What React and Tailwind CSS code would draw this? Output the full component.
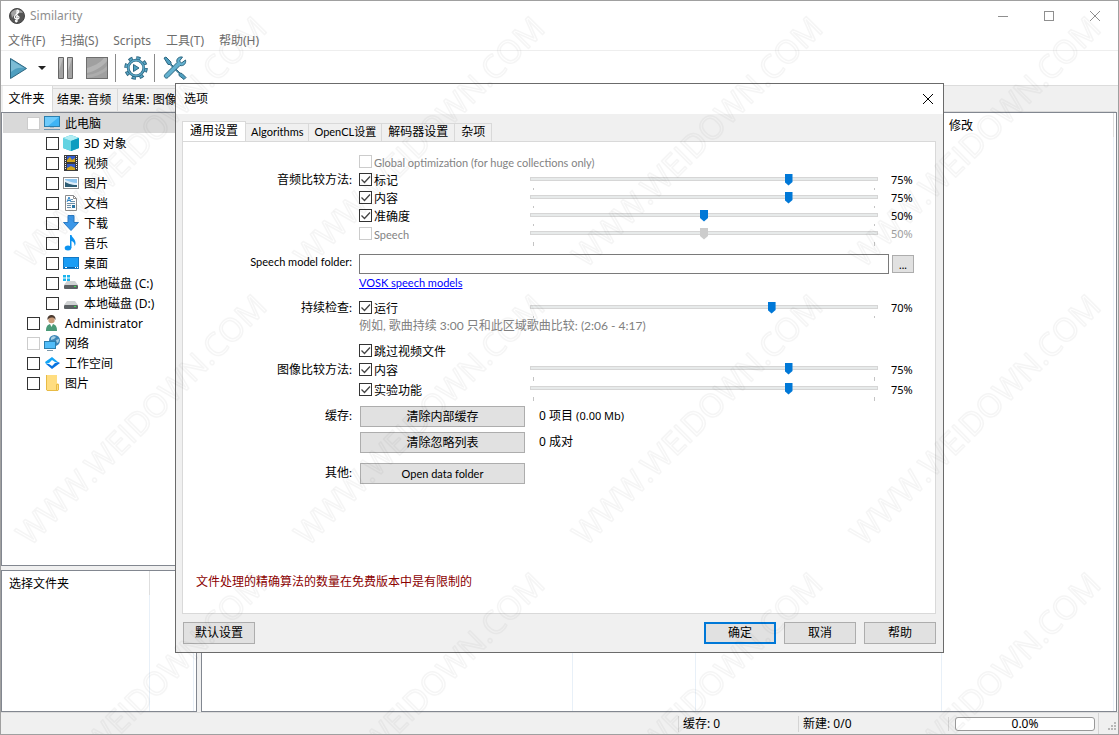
import { useState } from 'react'
import clsx from 'clsx'

const uiFont = 'font-["Noto_Sans","Noto_Sans_CJK_SC",sans-serif]'
const dialogFont = 'font-["Lato","Noto_Sans_CJK_SC",sans-serif]'

const menus = ['文件(F)', '扫描(S)', 'Scripts', '工具(T)', '帮助(H)']

const treeItems = [
  { label: '此电脑', icon: 'computer', selected: true, dim: true },
  { label: '3D 对象', icon: 'cube', child: true },
  { label: '视频', icon: 'film', child: true },
  { label: '图片', icon: 'picture', child: true },
  { label: '文档', icon: 'document', child: true },
  { label: '下载', icon: 'download', child: true },
  { label: '音乐', icon: 'music', child: true },
  { label: '桌面', icon: 'desktop', child: true },
  { label: '本地磁盘 (C:)', icon: 'systemDrive', child: true },
  { label: '本地磁盘 (D:)', icon: 'drive', child: true },
  { label: 'Administrator', icon: 'user' },
  { label: '网络', icon: 'network', dim: true },
  { label: '工作空间', icon: 'workspace' },
  { label: '图片', icon: 'folder' },
]

const dialogTabs = ['通用设置', 'Algorithms', 'OpenCL设置', '解码器设置', '杂项']

const icons = {
  computer: (
    <>
      <rect x="0.5" y="1.5" width="15" height="10" fill="#3fb4f5" stroke="#2b7fae" />
      <path d="M1 2h14L4 11H1z" fill="#6fcbfb" />
      <path d="M6 12h4v1H6z" fill="#a9bccb" />
      <path d="M0 14.5h16" stroke="#6f93ad" />
    </>
  ),
  cube: (
    <>
      <path d="M8 0l8 3v10l-8 3-8-3V3z" fill="#18b1cf" />
      <path d="M0 3l8 3v10l-8-3z" fill="#63d3e2" />
      <path d="M8 0l8 3-8 3-8-3z" fill="#b0edf3" />
      <path d="M8 6l8-3v10l-8 3z" fill="#0f9dc0" />
    </>
  ),
  film: (
    <>
      <rect x="1" y="0" width="14" height="16" fill="#3c3c3c" />
      <rect x="4" y="1" width="8" height="6" fill="#315bd0" />
      <rect x="4" y="9" width="8" height="6" fill="#315bd0" />
      <path d="M4 5l3-3 2 3 3-2v4H4zM4 13l4-2 4 2v2H4z" fill="#d0a51d" />
      <path d="M2.500 1v14M13.500 1v14" stroke="#f2f2f2" strokeDasharray="1 1" />
    </>
  ),
  picture: (
    <>
      <rect x="0.5" y="2.500" width="15" height="11" fill="#fff" stroke="#8e8e8e" />
      <rect x="2" y="4" width="12" height="8" fill="#8ec6f0" />
      <path d="M2 5c4 1 8 3 12 3v2H2z" fill="#e0eef9" />
      <path d="M2 7c3 1 5 3 12 3v2H2z" fill="#2d5c74" />
    </>
  ),
  document: (
    <>
      <path d="M2.500 0.500h8l3 3v12h-11z" fill="#fff" stroke="#8b8b8b" />
      <path d="M10.500 0.500v3h3" fill="none" stroke="#8b8b8b" />
      <path d="M4 8.500h8M4 10.500h4M4 12.500h4M8 6.500h4M8 4.500h2" stroke="#6f93ad" />
      <path d="M4 7l2-5 2 5M5 5.500h2" fill="none" stroke="#2f86c8" />
      <rect x="9" y="10" width="3" height="3" fill="#2b78a8" />
    </>
  ),
  download: <path d="M5 0.500h6v7h4.500L8 15.500 0.500 7.500H5z" fill="#3b97e8" stroke="#2b7bc4" />,
  music: (
    <>
      <ellipse cx="5" cy="13" rx="3.300" ry="2.500" fill="#0c93f0" />
      <path d="M7 0h1.500c.5 3 4.500 4 4 9-.2 1-.6 1.500-1 2 .3-3-1.500-4.500-3-5v7H7z" fill="#0c93f0" />
    </>
  ),
  desktop: (
    <>
      <rect x="0.5" y="2.500" width="15" height="11" fill="#1a9df5" stroke="#1378c4" />
      <path d="M1 12.500h14" stroke="#0b62a8" />
      <path d="M2 12.500h2M12 12.500h1M14 12.500h1" stroke="#fff" />
    </>
  ),
  systemDrive: (
    <>
      <path d="M0 0h3v2.500H0zM4 0h3v2.500H4zM0 3.500h3V6H0zM4 3.500h3V6H4z" fill="#19b4ee" />
      <path d="M4 6h8l3 4H1z" fill="#cfd2d3" />
      <rect x="1" y="10" width="14" height="4" rx="1" fill="#5c6164" />
      <rect x="11" y="11" width="2" height="1" fill="#38e04c" />
    </>
  ),
  drive: (
    <>
      <path d="M4 6h8l3 4H1z" fill="#cfd2d3" />
      <rect x="1" y="10" width="14" height="4" rx="1" fill="#5c6164" />
      <rect x="11" y="11" width="2" height="1" fill="#38e04c" />
    </>
  ),
  user: (
    <>
      <path d="M2 16c0-4 1-6 4-7h3c3 1 4 3 4 7z" fill="#4a9a78" />
      <path d="M6 9l1.500 3L9 9z" fill="#fff" />
      <circle cx="7.500" cy="5" r="3.200" fill="#c99a78" />
      <path d="M3.500 5C3 1 6 0 7.500 0s4.500 1 4 5c-1-2-2-2.500-4-2.500S4.500 3.500 3.500 5z" fill="#4b3a30" />
    </>
  ),
  network: (
    <>
      <circle cx="10.500" cy="5.500" r="5.500" fill="#3c86b8" />
      <path d="M7 3c1-2 4-2 5-1l-2 2-3 1zM12 5l3-1c0 3-1 4-2 4z" fill="#a8d0e4" />
      <rect x="0.5" y="6.500" width="11" height="7" fill="#52bdf8" stroke="#2b7fae" />
      <path d="M3 15.500h6" stroke="#7c98aa" />
    </>
  ),
  workspace: (
    <>
      <path d="M8 2l6 5h-3L8 5 5 8 2 9 1 7z" fill="#14a5f5" />
      <path d="M8 14L2 9h3l3 2 3-3 3-1 2 1z" fill="#0873e0" />
    </>
  ),
  folder: (
    <>
      <path d="M2 0h11v8l2 1v6H2z" fill="#ffdd80" />
      <path d="M2.500 0v15l.5.500h11l.5-.500V9.500h-2V15" fill="none" stroke="#e8bb45" />
    </>
  ),
}

function TreeIcon({ name }) {
  return (
    <svg viewBox="0 0 16 16" className="w-4 h-4 shrink-0" aria-hidden="true">
      {icons[name]}
    </svg>
  )
}

function CheckBox({ id, checked, disabled, dim, onChange }) {
  return (
    <span className="relative inline-flex w-[13px] h-[13px] shrink-0">
      <input
        id={id}
        type="checkbox"
        checked={checked}
        disabled={disabled}
        onChange={onChange}
        className={clsx(
          'peer appearance-none w-[13px] h-[13px] bg-white border',
          disabled || dim ? 'border-[#cccccc]' : 'border-[#333333]',
        )}
      />
      <svg
        viewBox="0 0 13 13"
        className="absolute inset-0 hidden peer-checked:block pointer-events-none"
        aria-hidden="true"
      >
        <path d="M2.500 6.500l3 3 5.500-6" fill="none" stroke="#444" strokeWidth="1.300" />
      </svg>
    </span>
  )
}

function Option({ id, label, defaultChecked = false, disabled }) {
  const [checked, setChecked] = useState(defaultChecked)
  return (
    <div className="flex items-center gap-0.5">
      <CheckBox id={id} checked={checked} disabled={disabled} onChange={() => setChecked(!checked)} />
      <label htmlFor={id} className={clsx('pt-0.5 whitespace-nowrap', disabled && 'text-[#838383]')}>
        {label}
      </label>
    </div>
  )
}

function Slider({ label, defaultValue, disabled, longTicks }) {
  const [value, setValue] = useState(defaultValue)
  return (
    <>
      <div className="flex-1 self-start pt-0.5">
        <input
          type="range"
          aria-label={label}
          value={value}
          disabled={disabled}
          onChange={(e) => setValue(e.target.value)}
          className={clsx(
            'block w-full h-3 appearance-none bg-transparent',
            '[&::-webkit-slider-runnable-track]:h-1 [&::-webkit-slider-runnable-track]:border [&::-webkit-slider-runnable-track]:border-[#d6d6d6] [&::-webkit-slider-runnable-track]:bg-[#e7eaea]',
            '[&::-webkit-slider-thumb]:appearance-none [&::-webkit-slider-thumb]:w-2 [&::-webkit-slider-thumb]:h-3 [&::-webkit-slider-thumb]:-mt-1 [&::-webkit-slider-thumb]:[clip-path:polygon(0_0,100%_0,100%_70%,50%_100%,0_70%)]',
            disabled
              ? '[&::-webkit-slider-thumb]:bg-[#cccccc]'
              : '[&::-webkit-slider-thumb]:bg-[#0078d7]',
          )}
        />
        <div className="flex justify-between px-[3px] pt-[3px]">
          <span className={clsx('w-px bg-[#c4c4c4]', longTicks ? 'h-1' : 'h-0.5')} />
          <span className={clsx('w-px bg-[#c4c4c4]', longTicks ? 'h-1' : 'h-0.5')} />
        </div>
      </div>
      <span className={clsx('w-11 ml-[13px]', uiFont, disabled && 'text-[#a0a0a0]')}>{value}%</span>
    </>
  )
}

function Row({ label, htmlFor, className = 'h-[18px]', children }) {
  return (
    <div className={clsx('flex items-center', className)}>
      <label htmlFor={htmlFor} className="w-[169px] mr-[7px] text-right whitespace-nowrap">
        {label}
      </label>
      {children}
    </div>
  )
}

function Button({ className, children }) {
  return (
    <button
      type="button"
      className={clsx('pt-px bg-[#e1e1e1] hover:bg-[#e5f1fb] whitespace-nowrap', className)}
    >
      {children}
    </button>
  )
}

function TitleBar() {
  return (
    <header className="flex items-center h-[29px] pl-2 bg-white text-[#8f8f8f]">
      <svg viewBox="0 0 16 16" className="w-4 h-4 mr-[5px]" aria-hidden="true">
        <circle cx="8" cy="8" r="7.500" fill="#555" stroke="#444" />
        <path d="M2 5a7 7 0 0 1 12 0c-4-1-8 0-11 5z" fill="#a5a5a5" />
        <path
          d="M8 14c-2 0-2-2-.6-2M8 14V3c0-1.500 2-1 1.500 1C9 6 5.500 6.500 5.500 9s4.500 2.500 4.500.5S7.300 7.700 7.500 9.500"
          fill="none"
          stroke="#fff"
          strokeWidth="1.200"
        />
      </svg>
      <h1 className="flex-1 pt-px">Similarity</h1>
      {['最小化', '最大化', '关闭'].map((name, i) => (
        <button key={name} type="button" aria-label={name} className="w-[46px] h-full grid place-items-center">
          <svg viewBox="0 0 10 10" className="w-2.5 h-2.5" fill="none" stroke="#8f8f8f">
            {i === 0 && <path d="M0 5.500h10" />}
            {i === 1 && <rect x="0.5" y="0.5" width="9" height="9" />}
            {i === 2 && <path d="M0 0l10 10M10 0L0 10" />}
          </svg>
        </button>
      ))}
    </header>
  )
}

function Toolbar() {
  return (
    <div className="flex items-center h-[34px] pl-[7px] bg-white">
      <button type="button" aria-label="开始" className="w-5 h-6">
        <svg viewBox="0 0 20 24">
          <path d="M2.500 2.500l16 10-16 10z" fill="#4f9fc0" stroke="#2d6680" />
          <path d="M3 4l13 8c-5-1-9 0-13 4z" fill="#7dbcd5" />
        </svg>
      </button>
      <button type="button" aria-label="开始选项" className="w-7 h-6 grid place-items-center">
        <svg viewBox="0 0 8 4" className="w-2 h-1">
          <path d="M0 0h8L4 4z" fill="#222" />
        </svg>
      </button>
      <button type="button" aria-label="暂停" className="w-5 h-6">
        <svg viewBox="0 0 20 24">
          <path d="M2.500 1.500h5v21h-5zM11.500 1.500h5v21h-5z" fill="#a3a3a3" stroke="#666" />
          <path d="M3 2h4L3 15zM12 2h4l-4 13z" fill="#c0c0c0" />
        </svg>
      </button>
      <button type="button" aria-label="停止" className="w-6 h-6 ml-2">
        <svg viewBox="0 0 24 24">
          <rect x="2.500" y="1.500" width="21" height="21" fill="#a0a0a0" stroke="#6e6e6e" />
          <path d="M3 12C10 10 16 7 20 2h3v3C18 11 11 15 3 17z" fill="#b4b4b4" />
          <path d="M3 19c8-1 15-4 20-9v4c-5 4-12 7-20 8z" fill="#adadad" />
        </svg>
      </button>
      <span className="w-px h-7 ml-[7px] bg-[#8a8a8a]" />
      <button type="button" aria-label="分析" className="w-6 h-6 ml-2">
        <svg viewBox="0 0 24 24" fill="none">
          <circle cx="12" cy="12" r="10" stroke="#2d6680" strokeWidth="3.600" strokeDasharray="4.200 3.654" />
          <circle cx="12" cy="12" r="9.500" stroke="#5aa7c6" strokeWidth="2.600" strokeDasharray="2.600 4.861" strokeDashoffset="-0.700" />
          <circle cx="12" cy="12" r="7.800" stroke="#2d6680" strokeWidth="2.800" />
          <circle cx="12" cy="12" r="7.800" stroke="#5aa7c6" strokeWidth="1.400" />
          <path d="M9.500 8.500l5.500 3.500-5.500 3.500z" fill="#4f9fc0" stroke="#2d6680" />
        </svg>
      </button>
      <span className="w-px h-7 ml-1.5 bg-[#8a8a8a]" />
      <button type="button" aria-label="选项" className="w-6 h-6 ml-2">
        <svg viewBox="0 0 24 24" stroke="#2d6680">
          <path d="M1 2l2-1 5 5v2l9 9 2 .5 4 4-2 2-5-4v-2L7 8.500H5z" fill="#4f9fc0" />
          <path
            d="M22.500 4l-4 3-2-2 3-4c-4-.5-6.500 2-5.500 5.500l-12 12c-2 2 1 5 3 3l12-12c3.500 1 6.500-2 5.500-5.500z"
            fill="#63b1cf"
          />
        </svg>
      </button>
    </div>
  )
}

function ResultTabs() {
  return (
    <div role="tablist" className="flex items-end h-[27px] pl-0.5 bg-[#f0f0f0] border-t border-[#dcdcdc]">
      <button
        type="button"
        role="tab"
        aria-selected="true"
        className="h-[26px] w-[50px] pr-0.5 bg-white border-r border-[#d9d9d9]"
      >
        文件夹
      </button>
      {['结果: 音频', '结果: 图像'].map((tab) => (
        <button
          key={tab}
          type="button"
          role="tab"
          aria-selected="false"
          className="h-6 pl-1 pr-1.5 border border-l-0 border-[#d9d9d9] whitespace-nowrap"
        >
          {tab}
        </button>
      ))}
      <span className="flex-1 h-px mr-0.5 bg-[#d9d9d9]" />
    </div>
  )
}

function FolderTree() {
  const [checked, setChecked] = useState([])

  const toggle = (i) => {
    setChecked((prev) => (prev.includes(i) ? prev.filter((n) => n !== i) : [...prev, i]))
  }

  return (
    <ul className="flex-1 bg-white border border-[#828790] pl-px">
      {treeItems.map((item, i) => (
        <li
          key={i}
          className={clsx(
            'flex items-center h-5 gap-1',
            item.child ? 'pl-[43px]' : 'pl-6',
            item.selected && 'bg-[#d9d9d9]',
          )}
        >
          <CheckBox
            id={`tree-${i}`}
            dim={item.dim}
            checked={checked.includes(i)}
            onChange={() => toggle(i)}
          />
          <label htmlFor={`tree-${i}`} className="flex items-center gap-[5px] whitespace-nowrap">
            <TreeIcon name={item.icon} />
            <span className="pt-0.5">{item.label}</span>
          </label>
        </li>
      ))}
    </ul>
  )
}

function ColumnCell({ className, children }) {
  return (
    <div className={clsx('flex flex-col', className)}>
      <div className="flex items-center h-6 pl-[7px] pt-0.5 border-r border-[#dedede]">{children}</div>
      <div className="flex-1 border-r border-[#e8f0f8]" />
    </div>
  )
}

function StatusBar() {
  return (
    <footer className="flex items-center justify-end h-[22px] bg-[#f0f0f0] border-t border-[#dcdcdc]">
      <span className="w-[120px] pl-1 border-l border-[#d4d4d4]">缓存: 0</span>
      <span className="w-[150px] pl-1 border-l border-[#d4d4d4]">新建: 0/0</span>
      <div className="w-[150px] pl-1.5 border-l border-[#d4d4d4]">
        <div className="w-[140px] h-3.5 leading-3 text-center bg-white border border-[#999999] rounded-[3px]">0.0%</div>
      </div>
      <div className="flex items-end justify-end w-5 h-full pb-0.5 border-l border-[#d4d4d4]">
        <svg viewBox="0 0 10 10" className="w-2.5 h-2.5" fill="#b8b8b8" aria-hidden="true">
          <path d="M6 0h2v2H6zM3 3h2v2H3zM6 3h2v2H6zM0 6h2v2H0zM3 6h2v2H3zM6 6h2v2H6z" />
        </svg>
      </div>
    </footer>
  )
}

function OptionsDialog() {
  const [tab, setTab] = useState(dialogTabs[0])

  return (
    <div
      role="dialog"
      aria-label="选项"
      className="flex flex-col w-[769px] max-w-full h-[570px] bg-[#f0f0f0] border border-[#6b6b6b] text-black"
    >
      <div className={clsx('flex items-center justify-between h-[30px] pl-2 bg-white text-xs', uiFont)}>
        <h2>选项</h2>
        <button type="button" aria-label="关闭" className="w-[30px] h-full grid place-items-center">
          <svg viewBox="0 0 10 10" className="w-2.5 h-2.5" fill="none" stroke="#000">
            <path d="M0 0l10 10M10 0L0 10" />
          </svg>
        </button>
      </div>

      <div className={clsx('flex flex-col flex-1 pl-1.5 pr-[7px] pt-[7px] pb-2 text-[11px] leading-4', dialogFont)}>
        {/* Tabs */}
        <div role="tablist" className="flex items-end h-5">
          {dialogTabs.map((name) => (
            <button
              key={name}
              type="button"
              role="tab"
              aria-selected={tab === name}
              onClick={() => setTab(name)}
              className={clsx(
                'border-t border-r border-[#d9d9d9] whitespace-nowrap',
                tab === name ? 'h-5 px-1.5 border-l bg-white' : 'h-[18px] px-[5px]',
              )}
            >
              {/[a-z]/.test(name) ? name : <span className="px-px text-xs">{name}</span>}
            </button>
          ))}
        </div>

        {/* General settings */}
        <div className="flex flex-col flex-1 bg-white border border-[#d9d9d9] pt-[11px]">
          <Row>
            <Option id="global" label="Global optimization (for huge collections only)" disabled />
          </Row>
          <Row label={<span className="text-xs">音频比较方法:</span>}>
            <div className="w-[171px] text-xs">
              <Option id="tags" label="标记" defaultChecked />
            </div>
            <Slider label="标记" defaultValue={75} />
          </Row>
          <Row>
            <div className="w-[171px] text-xs">
              <Option id="audio-content" label="内容" defaultChecked />
            </div>
            <Slider label="内容" defaultValue={75} />
          </Row>
          <Row>
            <div className="w-[171px] text-xs">
              <Option id="precise" label="准确度" defaultChecked />
            </div>
            <Slider label="准确度" defaultValue={50} />
          </Row>
          <Row>
            <div className="w-[171px]">
              <Option id="speech" label="Speech" disabled />
            </div>
            <Slider label="Speech" defaultValue={50} disabled longTicks />
          </Row>

          <Row label="Speech model folder:" htmlFor="model-folder" className="items-start h-5 mt-[11px]">
            <input id="model-folder" type="text" className="flex-1 h-5 px-1 border border-[#7a7a7a] bg-white" />
            <Button className="self-center w-[22px] h-[18px] ml-[3px] mr-[21px] border border-[#adadad]">...</Button>
          </Row>
          <Row>
            <a href="#models" className="text-[#0000ff] underline">
              VOSK speech models
            </a>
          </Row>

          <Row label={<span className="text-xs">持续检查:</span>} className="h-[18px] mt-[7px]">
            <div className="w-[171px] text-xs">
              <Option id="duration" label="运行" defaultChecked />
            </div>
            <Slider label="持续检查" defaultValue={70} />
          </Row>
          <Row>
            <span className="text-xs text-[#808080]">例如, 歌曲持续 3:00 只和此区域歌曲比较: (2:06 - 4:17)</span>
          </Row>

          <Row className="h-[18px] mt-[7px] text-xs">
            <Option id="skip-video" label="跳过视频文件" defaultChecked />
          </Row>
          <Row label={<span className="text-xs">图像比较方法:</span>} className="h-5">
            <div className="w-[171px] text-xs">
              <Option id="image-content" label="内容" defaultChecked />
            </div>
            <Slider label="图像内容" defaultValue={75} longTicks />
          </Row>
          <Row className="h-5">
            <div className="w-[171px] text-xs">
              <Option id="experimental" label="实验功能" defaultChecked />
            </div>
            <Slider label="实验功能" defaultValue={75} longTicks />
          </Row>

          <Row label="缓存:" className="h-[21px] mt-1.5 text-xs">
            <Button className="w-[165px] h-[21px] ml-px border border-[#adadad]">清除内部缓存</Button>
            <span className={clsx('ml-3.5', uiFont)}>
              0 项目 <span className="text-[11px]">(0.00 Mb)</span>
            </span>
          </Row>
          <Row className="h-[21px] mt-[5px] text-xs">
            <Button className="w-[165px] h-[21px] ml-px border border-[#adadad]">清除忽略列表</Button>
            <span className={clsx('ml-3.5', uiFont)}>0 成对</span>
          </Row>
          <Row label={<span className="text-xs">其他:</span>} className="h-[21px] mt-2.5">
            <Button className="w-[165px] h-[21px] ml-px border border-[#adadad]">Open data folder</Button>
          </Row>

          <p className="mt-auto mb-[23px] pl-[13px] text-xs text-[#8b0000]">
            文件处理的精确算法的数量在免费版本中是有限制的
          </p>
        </div>

        {/* Footer buttons */}
        <div className="flex gap-2 mt-2 ml-px text-xs">
          <Button className="w-[72px] h-[22px] mr-auto border border-[#adadad]">默认设置</Button>
          <Button className="w-[72px] h-[22px] border-2 border-[#0078d7]">确定</Button>
          <Button className="w-[72px] h-[22px] border border-[#adadad]">取消</Button>
          <Button className="w-[72px] h-[22px] border border-[#adadad]">帮助</Button>
        </div>
      </div>
    </div>
  )
}

function Watermark() {
  return (
    <svg className="absolute inset-0 w-full h-full pointer-events-none" aria-hidden="true">
      <defs>
        <pattern id="mark" width="278" height="278" patternUnits="userSpaceOnUse">
          <text
            transform="translate(29 268) rotate(-45)"
            className='font-["Open_Sans",sans-serif] text-[32px]'
            fill="none"
            stroke="#000"
            strokeOpacity="0.04"
            strokeWidth="1.500"
            strokeLinejoin="round"
          >
            WWW.WEIDOWN.COM
          </text>
        </pattern>
      </defs>
      <rect width="100%" height="100%" fill="url(#mark)" />
    </svg>
  )
}

export default function App() {
  return (
    <div
      className={clsx(
        'relative flex flex-col min-h-screen overflow-hidden bg-[#f0f0f0] border border-[#a0a0a0] text-xs leading-4 text-black',
        uiFont,
      )}
    >
      <TitleBar />
      <nav className="flex items-center gap-[15px] h-5 pl-[7px] pt-0.5 bg-white text-[#6d6d6d]">
        {menus.map((menu) => (
          <button key={menu} type="button">
            {menu}
          </button>
        ))}
      </nav>
      <div className="h-px bg-[#eeeeee]" />
      <Toolbar />
      <ResultTabs />

      <main className="flex flex-1 gap-1">
        <div className="flex flex-col gap-1 w-[196px]">
          <FolderTree />
          <div className="flex h-[142px] bg-white border border-[#828790]">
            <ColumnCell className="w-[148px]">选择文件夹</ColumnCell>
            <ColumnCell className="w-11" />
          </div>
        </div>
        <div className="flex flex-1 mr-px bg-white border border-[#828790]">
          <ColumnCell className="flex-1" />
          <ColumnCell className="w-[123px]" />
          <ColumnCell className="w-[246px]" />
          <ColumnCell className="w-[172px] mr-0.5">修改</ColumnCell>
        </div>
      </main>
      <StatusBar />

      <div className="absolute inset-0 flex items-center justify-center">
        <OptionsDialog />
      </div>
      <Watermark />
    </div>
  )
}
